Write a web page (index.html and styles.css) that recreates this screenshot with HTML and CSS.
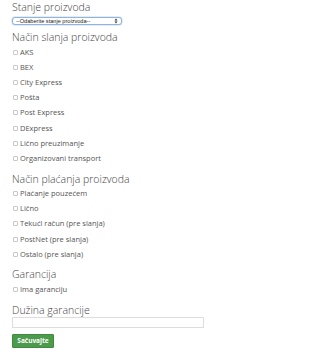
FILE: index.html
```html
<!DOCTYPE html>
<html>
<head>
<meta charset="utf-8">
<link rel="stylesheet" href="styles.css">
</head>
<body>
<form class="form">
  <div class="group">
    <div class="title">Stanje proizvoda</div>
    <div class="select-wrap">
      <select class="select"><option>--Odaberite stanje proizvoda--</option></select>
      <svg class="arrows" width="4" height="6" viewBox="0 0 4 6"><path d="M0.5 2.4 L2 0.6 L3.5 2.4 Z M0.5 3.6 L2 5.4 L3.5 3.6 Z" fill="#333"/></svg>
    </div>
  </div>
  <div class="group">
    <div class="title">Način slanja proizvoda</div>
    <label class="check"><span class="box"></span>AKS</label>
    <label class="check"><span class="box"></span>BEX</label>
    <label class="check"><span class="box"></span>City Express</label>
    <label class="check"><span class="box"></span>Pošta</label>
    <label class="check"><span class="box"></span>Post Express</label>
    <label class="check"><span class="box"></span>DExpress</label>
    <label class="check"><span class="box"></span>Lično preuzimanje</label>
    <label class="check"><span class="box"></span>Organizovani transport</label>
  </div>
  <div class="group">
    <div class="title">Način plaćanja proizvoda</div>
    <label class="check"><span class="box"></span>Plaćanje pouzećem</label>
    <label class="check"><span class="box"></span>Lično</label>
    <label class="check"><span class="box"></span>Tekući račun (pre slanja)</label>
    <label class="check"><span class="box"></span>PostNet (pre slanja)</label>
    <label class="check"><span class="box"></span>Ostalo (pre slanja)</label>
  </div>
  <div class="group">
    <div class="title">Garancija</div>
    <label class="check"><span class="box"></span>Ima garanciju</label>
  </div>
  <div class="group group-last">
    <div class="title">Dužina garancije</div>
    <div class="input"></div>
  </div>
  <button type="button" class="btn">Sačuvajte</button>
</form>
</body>
</html>
```
FILE: styles.css
```css
html, body {
  margin: 0;
  padding: 0;
  background: #fff;
}
body {
  font-family: "Open Sans", "DejaVu Sans", sans-serif;
  color: #555;
}
.form {
  display: flex;
  flex-direction: column;
  padding: 1px 16px 0 12px;
}
.group {
  display: flex;
  flex-direction: column;
  margin-bottom: 7px;
}
.group:first-child {
  margin-bottom: 6px;
}
.group-last {
  margin-bottom: 6px;
}
.title {
  font-size: 10.5px;
  font-weight: 300;
  color: #444;
  line-height: 13px;
  height: 13px;
}
.select-wrap {
  position: relative;
  width: 110px;
  height: 8px;
  margin-top: 3px;
  line-height: 0;
  font-size: 0;
}
.select {
  display: block;
  appearance: none;
  -webkit-appearance: none;
  box-sizing: border-box;
  width: 110px;
  height: 8px;
  min-height: 0;
  margin: 0;
  padding: 0 0 0 3px;
  border: 1px solid #8fb4e0;
  border-radius: 3px;
  background: #fff;
  font-family: "Liberation Sans", Arial, sans-serif;
  font-size: 5.6px;
  line-height: 6px;
  color: #222;
  box-shadow: 0 0 0 0.5px #c6dbf3;
}
.arrows {
  position: absolute;
  right: 4px;
  top: 1px;
}
.check {
  display: flex;
  align-items: center;
  height: 15.2px;
  font-size: 7.5px;
  color: #555;
}
.box {
  box-sizing: border-box;
  width: 5px;
  height: 5px;
  border: 1px solid #c8c8c8;
  border-radius: 1px;
  margin: 1px 2.5px 0 0.5px;
  background: #fff;
}
.input {
  box-sizing: border-box;
  width: 192px;
  height: 11px;
  border: 1px solid #ddd;
}
.btn {
  align-self: flex-start;
  width: 42px;
  height: 14px;
  padding: 0;
  margin: 0;
  border: 1px solid #3f8a3f;
  border-radius: 1px;
  background: #4c9a4c;
  color: #fff;
  font-family: "Open Sans", sans-serif;
  font-size: 6.5px;
  font-weight: 700;
  line-height: 12px;
}
```
